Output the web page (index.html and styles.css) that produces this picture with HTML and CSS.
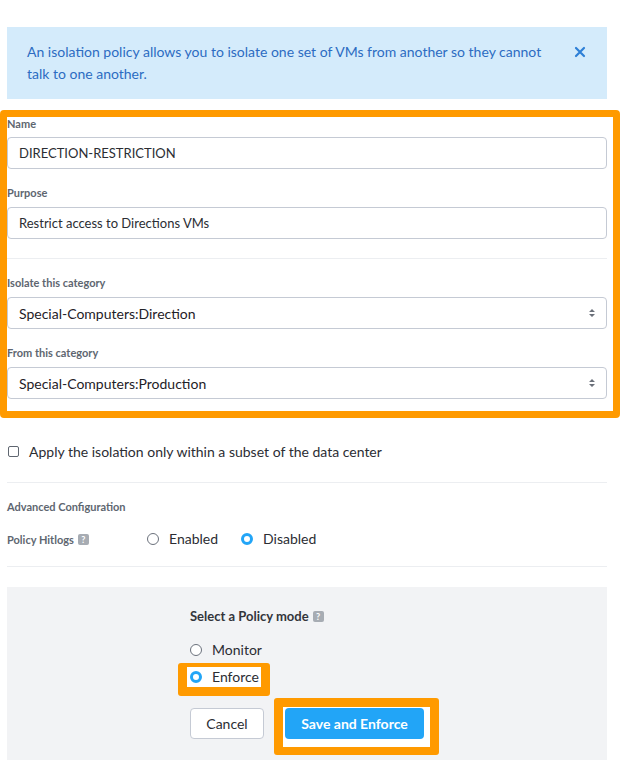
FILE: index.html
```html
<!DOCTYPE html>
<html lang="en">
<head>
  <meta charset="UTF-8">
  <title>Isolation Policy</title>
  <link rel="stylesheet" href="styles.css">
</head>
<body>
  <div class="page">

    <!-- INFO -->
    <div class="banner">
      <p>An isolation policy allows you to isolate one set of VMs from another so they cannot talk to one another.</p>
      <svg class="close" width="12" height="12" viewBox="0 0 12 12"><path d="M2 2 L10 10 M10 2 L2 10" stroke="#2d7fd6" stroke-width="2.2" stroke-linecap="round"/></svg>
    </div>

    <!-- FIELDS -->
    <div class="highlight">
      <div class="field">
        <label>Name</label>
        <input type="text" value="DIRECTION-RESTRICTION">
      </div>
      <div class="field">
        <label>Purpose</label>
        <input type="text" value="Restrict access to Directions VMs">
      </div>

      <hr>

      <div class="field">
        <label>Isolate this category</label>
        <div class="select">
          <span>Special-Computers:Direction</span>
          <svg width="8" height="10" viewBox="0 0 8 10"><path d="M4 1 L7 4 H1 Z M4 9 L7 6 H1 Z" fill="#6b707a"/></svg>
        </div>
      </div>
      <div class="field">
        <label>From this category</label>
        <div class="select">
          <span>Special-Computers:Production</span>
          <svg width="8" height="10" viewBox="0 0 8 10"><path d="M4 1 L7 4 H1 Z M4 9 L7 6 H1 Z" fill="#6b707a"/></svg>
        </div>
      </div>
    </div>

    <label class="check">
      <input type="checkbox">
      <span>Apply the isolation only within a subset of the data center</span>
    </label>

    <hr class="after-check">

    <div class="section-title">Advanced Configuration</div>
    <div class="hitlogs">
      <div class="hitlogs-label">Policy Hitlogs <span class="help">?</span></div>
      <label class="radio"><input type="radio" name="hitlogs"> Enabled</label>
      <label class="radio"><input type="radio" name="hitlogs" checked> Disabled</label>
    </div>

    <hr class="last">

    <!-- MODO -->
    <div class="mode-panel">
      <div class="mode">
        <div class="mode-title">Select a Policy mode <span class="help">?</span></div>
        <label class="radio mode-option"><input type="radio" name="mode"> Monitor</label>
        <label class="radio mode-option marked-option"><input type="radio" name="mode" checked> Enforce</label>
        <div class="actions">
          <button class="cancel">Cancel</button>
          <span class="marked-btn">
            <button class="primary">Save and Enforce</button>
          </span>
        </div>
      </div>
    </div>

  </div>
</body>
</html>
```

FILE: styles.css
```css
body {
  margin: 0;
  font-family: Lato, "Open Sans", sans-serif;
  color: #2b2d33;
  background: #ffffff;
}

.page {
  width: 600px;
  padding: 27px 0 0 7px;
}

.banner {
  display: flex;
  align-items: flex-start;
  background-color: #d4ebfb;
  padding: 14px 20px;
  height: 44px;
}

.banner p {
  margin: 0;
  flex: 1;
  font-size: 14px;
  line-height: 22px;
  color: #2c6cc2;
  padding-right: 30px;
}

.close {
  margin-top: 5px;
  margin-right: 1px;
}

.highlight {
  margin: 11px 0 0 -7px;
  border: 7px solid #ff9a00;
  border-radius: 4px;
  padding: 0 6px 12px 0;
  width: 600px;
}

.field {
  margin-top: 17px;
}

.highlight .field:first-child {
  margin-top: 0;
}

.field label {
  display: block;
  font-size: 11px;
  font-weight: bold;
  line-height: 14px;
  color: #5e6670;
  margin-bottom: 7px;
}

.highlight .field:first-child label {
  margin-bottom: 6px;
}

.field input,
.select {
  box-sizing: border-box;
  display: block;
  width: 100%;
  height: 32px;
  margin: 0;
  border: 1px solid #c5cad4;
  border-radius: 4px;
  padding: 0 11px;
  font-family: inherit;
  font-size: 13px;
  color: #2b2d33;
  background: #fff;
}

.select {
  display: flex;
  align-items: center;
  justify-content: space-between;
  font-size: 14px;
  color: #1f2127;
  padding-right: 10px;
}

hr {
  border: none;
  border-top: 1px solid #eceef1;
  margin: 19px 0 0;
}

hr.after-check {
  margin-top: 21px;
}

hr.last {
  margin-top: 17px;
}

.check {
  display: flex;
  align-items: center;
  height: 20px;
  margin-top: 23px;
  font-size: 14px;
  color: #2b2d33;
}

.check input {
  appearance: none;
  width: 11px;
  height: 11px;
  margin: 0 10px 0 1px;
  border: 1px solid #5f6670;
  border-radius: 2px;
  background: #fff;
}

.section-title {
  margin-top: 17px;
  font-size: 11px;
  font-weight: bold;
  line-height: 14px;
  color: #5e6670;
}

.hitlogs {
  display: flex;
  align-items: center;
  height: 20px;
  margin-top: 15px;
}

.hitlogs-label {
  width: 140px;
  font-size: 11px;
  font-weight: bold;
  color: #5e6670;
  display: flex;
  align-items: center;
}

.help {
  display: inline-block;
  width: 11px;
  height: 11px;
  margin-left: 4px;
  border-radius: 2px;
  background-color: #a7acb3;
  color: #fff;
  font-size: 9px;
  font-weight: bold;
  line-height: 11px;
  text-align: center;
}

.radio {
  display: flex;
  align-items: center;
  height: 20px;
  line-height: 20px;
  font-size: 14px;
  color: #2b2d33;
  margin-right: 23px;
}

.radio input {
  appearance: none;
  box-sizing: border-box;
  width: 12px;
  height: 12px;
  margin: 0 10px 0 0;
  border: 1px solid #6b717c;
  border-radius: 50%;
  background: #fff;
}

.radio input:checked {
  border: 3.5px solid #22a5f7;
  background: #fff;
}

.mode-panel {
  margin-top: 20px;
  background-color: #f2f3f5;
  padding: 21px 0;
  display: flex;
  justify-content: center;
}

.mode {
  width: 234px;
}

.mode-title {
  font-size: 13px;
  font-weight: bold;
  line-height: 16px;
  color: #33353b;
  display: flex;
  align-items: center;
  margin-bottom: 16px;
}

.mode-option {
  margin-bottom: 7px;
}

.marked-option {
  position: relative;
  z-index: 0;
}

.marked-option::before {
  content: "";
  position: absolute;
  left: -3px;
  top: 0;
  width: 74px;
  height: 20px;
  background: #fff;
  z-index: -1;
}

.marked-option::after {
  content: "";
  position: absolute;
  left: -12px;
  top: -4px;
  width: 74px;
  height: 20px;
  border: 9px solid #ff9a00;
  border-top-width: 4px;
  border-radius: 3px;
  z-index: 1;
}

.actions {
  display: flex;
  gap: 21px;
  margin-top: 21px;
}

button {
  display: block;
  height: 31px;
  border-radius: 4px;
  font-family: inherit;
  font-size: 14px;
  cursor: pointer;
}

.cancel {
  width: 74px;
  background: #fff;
  border: 1px solid #c5cad4;
  color: #2b2d33;
}

.marked-btn {
  position: relative;
  z-index: 0;
}

.marked-btn::before {
  content: "";
  position: absolute;
  left: -11px;
  top: -10px;
  width: 147px;
  height: 40px;
  border: 9px solid #ff9a00;
  border-bottom-width: 8px;
  border-radius: 3px;
  background: #fff;
  z-index: -1;
}

.primary {
  width: 139px;
  border: none;
  background-color: #22a5f7;
  color: #fff;
  font-weight: bold;
}
```
